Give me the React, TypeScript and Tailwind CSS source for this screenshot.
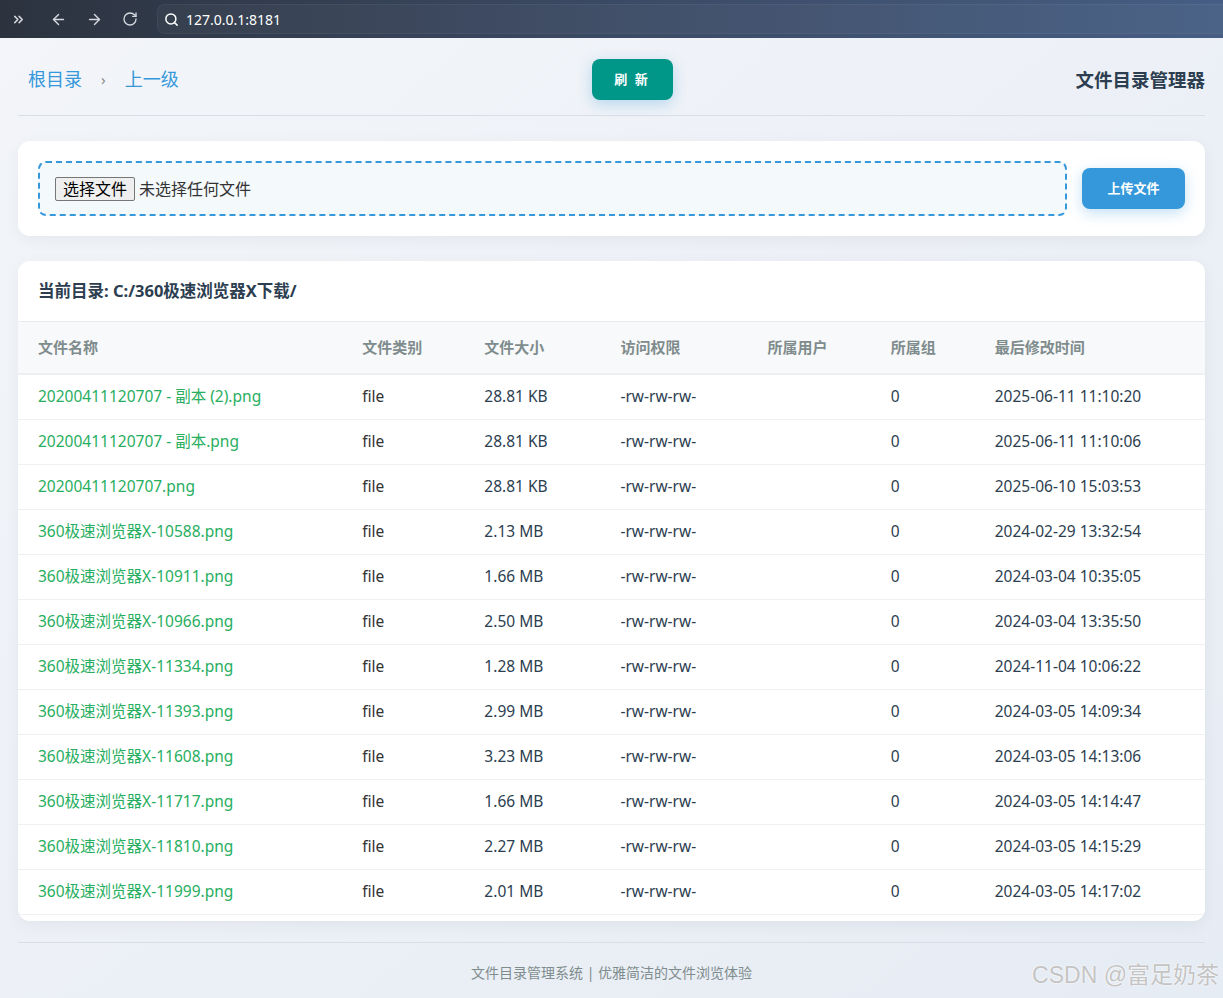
import React from "react";
import { ChevronsRight, ArrowLeft, ArrowRight, RotateCw, Search } from "lucide-react";

type Row = { name: string; size: string; time: string };

const rows: Row[] = [
  { name: "20200411120707 - 副本 (2).png", size: "28.81 KB", time: "2025-06-11 11:10:20" },
  { name: "20200411120707 - 副本.png", size: "28.81 KB", time: "2025-06-11 11:10:06" },
  { name: "20200411120707.png", size: "28.81 KB", time: "2025-06-10 15:03:53" },
  { name: "360极速浏览器X-10588.png", size: "2.13 MB", time: "2024-02-29 13:32:54" },
  { name: "360极速浏览器X-10911.png", size: "1.66 MB", time: "2024-03-04 10:35:05" },
  { name: "360极速浏览器X-10966.png", size: "2.50 MB", time: "2024-03-04 13:35:50" },
  { name: "360极速浏览器X-11334.png", size: "1.28 MB", time: "2024-11-04 10:06:22" },
  { name: "360极速浏览器X-11393.png", size: "2.99 MB", time: "2024-03-05 14:09:34" },
  { name: "360极速浏览器X-11608.png", size: "3.23 MB", time: "2024-03-05 14:13:06" },
  { name: "360极速浏览器X-11717.png", size: "1.66 MB", time: "2024-03-05 14:14:47" },
  { name: "360极速浏览器X-11810.png", size: "2.27 MB", time: "2024-03-05 14:15:29" },
  { name: "360极速浏览器X-11999.png", size: "2.01 MB", time: "2024-03-05 14:17:02" },
];

const font = { fontFamily: '"Noto Sans", "Noto Sans CJK SC", sans-serif' };

export default function App() {
  return (
    <div
      className="relative h-[998px] w-full overflow-hidden bg-gradient-to-br from-[#f3f5f9] to-[#e6ecf4] text-[#2c3e50]"
      style={font}
    >
      {/* browser bar */}
      <div className="flex h-[38px] items-center bg-gradient-to-r from-[#2c333f] via-[#3b4a64] to-[#465e84] text-[#d5d9df]">
        <ChevronsRight className="ml-[11px] h-[15px] w-[15px]" strokeWidth={2.4} />
        <ArrowLeft className="ml-[24px] h-[17px] w-[17px]" strokeWidth={2} />
        <ArrowRight className="ml-[19px] h-[17px] w-[17px]" strokeWidth={2} />
        <RotateCw className="ml-[19px] h-[16px] w-[16px]" strokeWidth={2} />
        <div className="ml-[19px] flex h-[30px] flex-1 items-center rounded-l-[8px] border border-r-0 border-white/5 bg-white/[0.03] pl-[6px]">
          <Search className="h-[15px] w-[15px] text-white" strokeWidth={2.4} />
          <span className="ml-[7px] text-[14px] text-white" style={{ fontFamily: '"Noto Sans", sans-serif' }}>
            127.0.0.1:8181
          </span>
        </div>
      </div>

      <div className="px-[18px]">
        {/* header */}
        <div className="flex items-center justify-between border-b border-[#dadfe6] pt-[21px] pb-[15px]">
          <div className="flex items-center px-[10px] text-[18px] text-[#3498db]">
            <span>根目录</span>
            <span className="mx-[19px] text-[15px] text-[#888]">›</span>
            <span>上一级</span>
          </div>
          <button className="h-[41px] w-[81px] rounded-[8px] bg-[#009688] text-[13px] font-bold tracking-[2px] text-white shadow-[0_4px_14px_rgba(52,152,219,0.3)]">
            刷 新
          </button>
          <div className="text-[18.5px] font-bold text-[#2c3e50]">文件目录管理器</div>
        </div>

        {/* upload card */}
        <div className="mt-[25px] flex items-center gap-[15px] rounded-[12px] bg-white p-[20px] shadow-[0_4px_16px_rgba(0,0,0,0.05)]">
          <div className="flex h-[55px] flex-1 items-center rounded-[8px] border-2 border-dashed border-[#3498db] bg-[#f4f9fc] px-[15px]">
            <button
              className="h-[24px] rounded-[2px] border border-[#767676] bg-[#efefef] px-[7px] text-[16px] leading-[20px] text-black"
              style={font}
            >
              选择文件
            </button>
            <span className="ml-[4px] text-[16px] text-[#333]">未选择任何文件</span>
          </div>
          <button className="h-[41px] w-[103px] rounded-[8px] bg-[#3498db] text-[13px] font-bold text-white shadow-[0_4px_14px_rgba(52,152,219,0.3)]">
            上传文件
          </button>
        </div>

        {/* table card */}
        <div className="mt-[25px] overflow-hidden rounded-[12px] bg-white pb-[6px] shadow-[0_4px_16px_rgba(0,0,0,0.05)]">
          <div className="flex h-[61px] items-center border-b border-[#e7eaee] px-[20px] text-[16.5px] font-bold text-[#2c3e50]">
            当前目录: C:/360极速浏览器X下载/
          </div>
          <table className="w-full table-fixed border-collapse text-left text-[15.5px]">
            <colgroup>
              <col className="w-[324px]" />
              <col className="w-[122px]" />
              <col className="w-[136px]" />
              <col className="w-[147px]" />
              <col className="w-[123px]" />
              <col className="w-[104px]" />
              <col className="w-[230px]" />
            </colgroup>
            <thead>
              <tr className="h-[52px] border-b-2 border-[#ecf0f1] bg-[#f8f9fa] text-[15px] font-semibold text-[#7f8c8d]">
                <th className="pl-[20px] font-semibold">文件名称</th>
                <th className="pl-[20px] font-semibold">文件类别</th>
                <th className="pl-[20px] font-semibold">文件大小</th>
                <th className="pl-[20px] font-semibold">访问权限</th>
                <th className="pl-[20px] font-semibold">所属用户</th>
                <th className="pl-[20px] font-semibold">所属组</th>
                <th className="pl-[20px] font-semibold">最后修改时间</th>
              </tr>
            </thead>
            <tbody>
              {rows.map((r) => (
                <tr key={r.name} className="h-[45px] border-b border-[#eef0f2]">
                  <td className="whitespace-nowrap pl-[20px] text-[#27ae60]">{r.name}</td>
                  <td className="pl-[20px] text-[#333]">file</td>
                  <td className="pl-[20px] text-[#2c3e50]">{r.size}</td>
                  <td className="pl-[20px] text-[#2c3e50]">-rw-rw-rw-</td>
                  <td className="pl-[20px]"></td>
                  <td className="pl-[20px] text-[#2c3e50]">0</td>
                  <td className="pl-[20px] text-[#2c3e50]">{r.time}</td>
                </tr>
              ))}
            </tbody>
          </table>
        </div>

        {/* footer */}
        <div className="mt-[21px] border-t border-[#d9dee6] pt-[20px] text-center text-[14px] leading-[20px] text-[#7f8c8d]">
          文件目录管理系统 | 优雅简洁的文件浏览体验
        </div>
      </div>

      <div
        className="absolute bottom-[6px] right-[4px] text-[23px] text-[#c4c4c4] [text-shadow:0_0_1px_#fff,0_0_2px_#fff]"
        style={{ fontFamily: '"Liberation Sans", "Noto Sans CJK SC", sans-serif' }}
      >
        CSDN @富足奶茶
      </div>
    </div>
  );
}
